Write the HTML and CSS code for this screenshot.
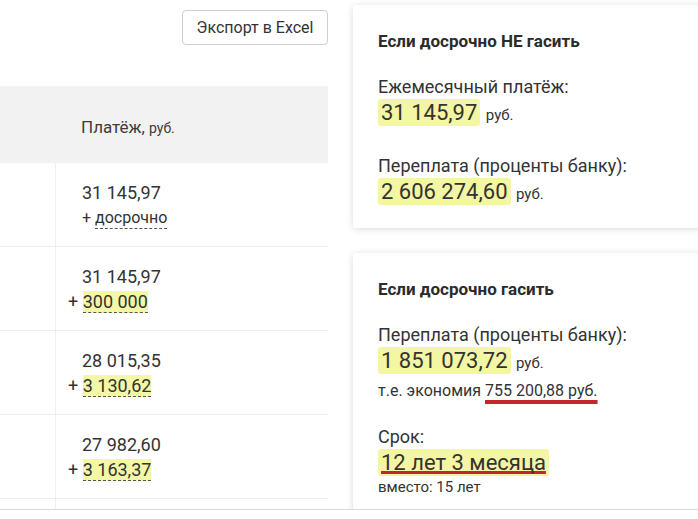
FILE: index.html
```html
<!DOCTYPE html>
<html lang="ru">

<head>
    <meta charset="UTF-8">
    <meta name="viewport" content="width=device-width, initial-scale=1.0">
    <title>Досрочное погашение</title>
    <link rel="stylesheet" href="styles.css">
</head>

<body>
    <div class="page">
        <div class="main">
            <div class="toolbar">
                <button class="btn">Экспорт в Excel</button>
            </div>
            <div class="schedule">
                <div class="thead">Платёж, <small>руб.</small></div>

                <div class="row">
                    <div class="num"></div>
                    <div class="pay">
                        <div class="sum">31 145,97</div>
                        <div class="add">+ <span class="link">досрочно</span></div>
                    </div>
                </div>

                <div class="row">
                    <div class="num"></div>
                    <div class="pay">
                        <div class="sum">31 145,97</div>
                        <div class="add out">+ <span class="mark">300 000</span></div>
                    </div>
                </div>

                <div class="row">
                    <div class="num"></div>
                    <div class="pay">
                        <div class="sum">28 015,35</div>
                        <div class="add out">+ <span class="mark">3 130,62</span></div>
                    </div>
                </div>

                <div class="row">
                    <div class="num"></div>
                    <div class="pay">
                        <div class="sum">27 982,60</div>
                        <div class="add out">+ <span class="mark">3 163,37</span></div>
                    </div>
                </div>

                <div class="row">
                    <div class="num"></div>
                    <div class="pay"></div>
                </div>
            </div>
        </div>

        <div class="side">
            <div class="card">
                <h3>Если досрочно НЕ гасить</h3>
                <div class="group">
                    <div class="label">Ежемесячный платёж:</div>
                    <div class="value"><span class="hl">31 145,97</span> <span class="unit">руб.</span></div>
                </div>
                <div class="group">
                    <div class="label">Переплата (проценты банку):</div>
                    <div class="value"><span class="hl">2 606 274,60</span> <span class="unit">руб.</span></div>
                </div>
            </div>

            <div class="card">
                <h3>Если досрочно гасить</h3>
                <div class="group">
                    <div class="label">Переплата (проценты банку):</div>
                    <div class="value"><span class="hl">1 851 073,72</span> <span class="unit">руб.</span></div>
                    <div class="note">т.е. экономия <span class="red">755 200,88 руб.</span></div>
                </div>
                <div class="group">
                    <div class="label">Срок:</div>
                    <div class="value"><span class="hl red tight">12 лет 3 месяца</span></div>
                    <div class="small">вместо: 15 лет</div>
                </div>
            </div>
        </div>
    </div>
</body>

</html>
```

FILE: styles.css
```css
* {
    margin: 0;
    padding: 0;
    box-sizing: border-box;
}

body {
    font-family: Roboto, "Open Sans", sans-serif;
    color: #333;
    background: #fff;
}

.page {
    display: flex;
    gap: 25px;
    width: 698px;
    height: 510px;
    overflow: hidden;
    border-bottom: 1px solid #d9d9d9;
}

.main {
    width: 328px;
    flex-shrink: 0;
}

.toolbar {
    display: flex;
    justify-content: flex-end;
    height: 86px;
    padding-top: 10px;
}

.btn {
    width: 146px;
    height: 35px;
    background: #fff;
    border: 1px solid #cfcfcf;
    border-radius: 4px;
    font-family: Roboto, sans-serif;
    font-size: 16px;
    color: #333;
}

.thead {
    height: 77px;
    display: flex;
    align-items: center;
    gap: 4px;
    padding: 4px 0 0 81px;
    background: #f2f2f2;
    font-size: 17px;
    color: #3c3c3c;
}

.thead small {
    font-size: 14px;
    padding-top: 2px;
}

.row {
    display: flex;
    height: 84px;
    border-bottom: 1px solid #eeeeee;
}

.num {
    width: 56px;
    border-right: 1px solid #efefef;
}

.pay {
    padding: 17px 0 0 26px;
    line-height: 25px;
    font-size: 18px;
}

.add {
    font-size: 16px;
}

.add.out {
    font-size: 18px;
    text-indent: -14px;
}

.link {
    border-bottom: 1px dashed #555;
    padding-bottom: 1px;
}

.mark {
    background: #f4f7a6;
    border-bottom: 1px dashed #555;
}

.side {
    flex-shrink: 0;
    width: 380px;
    padding-top: 5px;
    display: flex;
    flex-direction: column;
    gap: 25px;
}

.card {
    background: #fff;
    border-radius: 3px;
    box-shadow: 0 1px 7px rgba(0, 0, 0, 0.15);
    padding: 25px 25px 19px;
}

.card h3 {
    font-size: 17px;
    line-height: 22px;
    font-weight: 700;
    color: #2b2b2b;
    margin-bottom: 24px;
}

.group + .group {
    margin-top: 25px;
}

.label {
    font-size: 18px;
    line-height: 22px;
}

.value {
    font-size: 22px;
    line-height: 30px;
}

.hl {
    background: #f3f6a2;
    padding: 1px 3px;
    border-radius: 3px;
}

.unit {
    font-size: 15px;
}

.note {
    margin-top: 3px;
    font-size: 16px;
    line-height: 20px;
}

.small {
    font-size: 15px;
    line-height: 18px;
}

.red {
    text-decoration: underline #c4262d;
    text-decoration-thickness: 4px;
    text-underline-offset: 4px;
    text-decoration-skip-ink: none;
}

.red.tight {
    text-decoration-thickness: 3px;
    text-underline-offset: 1px;
}
```
